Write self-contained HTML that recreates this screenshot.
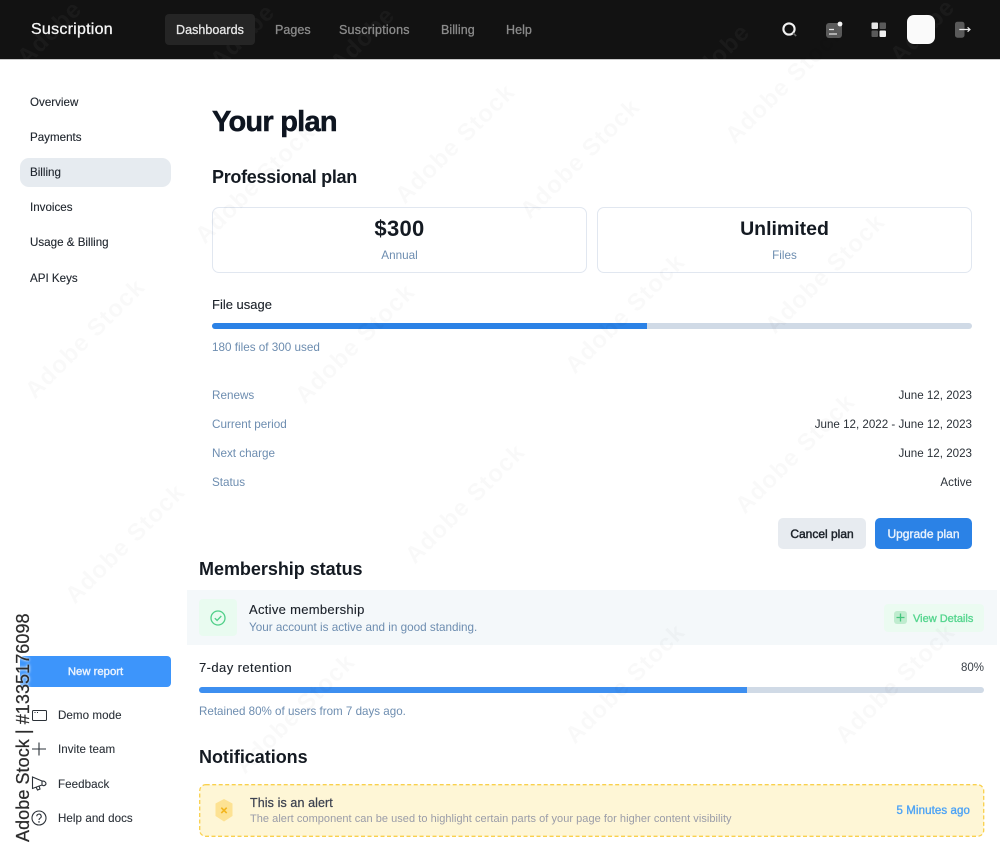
<!DOCTYPE html>
<html lang="en"><head><meta charset="utf-8"><title>Suscription</title>
<style>
html,body{margin:0;padding:0;background:#fff}
#p{position:relative;width:1000px;height:856px;overflow:hidden;background:#fff;font-family:"Liberation Sans",sans-serif;color:#1b2129}
#p div{position:absolute;white-space:nowrap}
.t{line-height:16px}
.nav{font-size:12.5px;top:22px;color:#8b8b8b;letter-spacing:.05px;-webkit-text-stroke:.3px #8b8b8b}
.side{font-size:11.6px;left:30px;color:#20262e;-webkit-text-stroke:.12px #20262e}
.lab{font-size:11.7px;left:212px;color:#6d8db0}
.val{font-size:11.6px;right:28px;color:#2b3138}
.h2{font-size:18px;font-weight:700;color:#141a22;letter-spacing:-.03px;line-height:22px}
.foot{font-size:11.6px;left:58px;color:#2b3138;letter-spacing:.05px;-webkit-text-stroke:.1px #2b3138}
svg{position:absolute}
.wm{font-size:24px;font-weight:700;color:#000;opacity:.018;transform:rotate(-45deg);transform-origin:0 0;letter-spacing:1px}
.wh{font-size:24px;font-weight:700;color:#fff;opacity:.03;transform:rotate(-45deg);transform-origin:0 0;letter-spacing:1px}
.btn{font-size:12px;text-align:center}
</style></head><body><div id="p">

<div style="left:0;top:0;width:1000px;height:59px;background:#121212;border-bottom:1px solid #c9c9c9"></div>
<div class="wh" style="left:12px;top:52px">Adobe</div>
<div class="wh" style="left:205px;top:55px">Adobe</div>
<div class="wh" style="left:325px;top:58px">Adobe</div>
<div class="wh" style="left:680px;top:75px">Adobe</div>
<div class="wh" style="left:885px;top:50px">Adobe</div>
<div class="t" style="left:31px;top:20px;font-size:16px;color:#f4f4f4;letter-spacing:.25px;line-height:20px;-webkit-text-stroke:.3px #f4f4f4">Suscription</div>
<div style="left:165px;top:14px;width:90px;height:31px;background:#252525;border-radius:4px"></div>
<div class="t nav" style="left:176px;color:#e6e6e6;-webkit-text-stroke:.3px #e6e6e6">Dashboards</div>
<div class="t nav" style="left:275px">Pages</div>
<div class="t nav" style="left:339px;letter-spacing:.22px">Suscriptions</div>
<div class="t nav" style="left:441px">Billing</div>
<div class="t nav" style="left:506px">Help</div>

<svg style="left:780px;top:20px" width="20" height="20" viewBox="0 0 20 20"><circle cx="9" cy="9" r="5.6" fill="none" stroke="#f2f2f2" stroke-width="2.1"/><path d="M13.2 13.2l3 2.8" stroke="#666" stroke-width="1.6"/></svg>
<svg style="left:824px;top:20px" width="22" height="20" viewBox="0 0 22 20"><rect x="2" y="3" width="16" height="15" rx="3" fill="#5a5a5a"/><path d="M5 9.5h5M5 14h8" stroke="#e8e8e8" stroke-width="1.2"/><circle cx="16" cy="4" r="2.4" fill="#f5f5f5"/></svg>
<svg style="left:870px;top:21px" width="18" height="18" viewBox="0 0 18 18"><rect x="1.5" y="1.5" width="6.5" height="6.5" rx="1" fill="#e6e6e6"/><rect x="9.5" y="1.5" width="6.5" height="6.5" rx="1" fill="#5a5a5a"/><rect x="1.5" y="9.500" width="6.5" height="6.5" rx="1" fill="#5a5a5a"/><rect x="9.5" y="9.5" width="6.5" height="6.5" rx="1" fill="#f0f0f0"/></svg>
<div style="left:906.5px;top:15px;width:28px;height:28.5px;background:#fafafa;border-radius:7px"></div>
<svg style="left:954px;top:20px" width="20" height="20" viewBox="0 0 20 20"><rect x="1" y="1.7" width="9.5" height="16" rx="2.5" fill="#5a5a5a"/><path d="M5.3 9.5H16M13.6 7.3l2.400 2.200-2.400 2.200" fill="none" stroke="#e8e8e8" stroke-width="1.2"/></svg>

<div style="left:20px;top:158px;width:151px;height:29px;background:#e6ebf0;border-radius:9px"></div>
<div class="t side" style="top:95px">Overview</div>
<div class="t side" style="top:130px">Payments</div>
<div class="t side" style="top:165px">Billing</div>
<div class="t side" style="top:200px">Invoices</div>
<div class="t side" style="top:235px">Usage &amp; Billing</div>
<div class="t side" style="top:271px">API Keys</div>

<div style="left:212px;top:104px;font-size:29px;font-weight:700;color:#0e1520;letter-spacing:-.75px;line-height:36px;-webkit-text-stroke:.5px #0e1520">Your plan</div>
<div class="h2" style="left:212px;top:166px;letter-spacing:-.3px">Professional plan</div>

<div style="left:212px;top:207px;width:373px;height:64px;border:1.5px solid #e1e7f0;border-radius:7px"></div>
<div style="left:597px;top:207px;width:373px;height:64px;border:1.5px solid #e1e7f0;border-radius:7px"></div>
<div style="left:212px;top:216px;width:375px;text-align:center;font-size:22px;font-weight:700;line-height:26px;color:#141a22;letter-spacing:.3px">$300</div>
<div style="left:597px;top:216px;width:375px;text-align:center;font-size:19.5px;font-weight:700;line-height:26px;color:#141a22">Unlimited</div>
<div class="t" style="left:212px;top:248px;width:375px;text-align:center;font-size:11.7px;color:#6d8db0">Annual</div>
<div class="t" style="left:597px;top:248px;width:375px;text-align:center;font-size:11.7px;color:#6d8db0">Files</div>

<div class="t" style="left:212px;top:297px;font-size:13px;color:#1b2129;-webkit-text-stroke:.12px #1b2129">File usage</div>
<div style="left:212px;top:323px;width:760px;height:6px;background:#d0dae6;border-radius:3px"></div>
<div style="left:212px;top:323px;width:435px;height:6px;background:#2b82e6;border-radius:3px 0 0 3px"></div>
<div class="t lab" style="top:340px">180 files of 300 used</div>

<div class="t lab" style="top:388px">Renews</div><div class="t val" style="top:388px">June 12, 2023</div>
<div class="t lab" style="top:417px">Current period</div><div class="t val" style="top:417px">June 12, 2022 - June 12, 2023</div>
<div class="t lab" style="top:446px">Next charge</div><div class="t val" style="top:446px">June 12, 2023</div>
<div class="t lab" style="top:475px">Status</div><div class="t val" style="top:475px">Active</div>

<div style="left:778px;top:518px;width:88px;height:31px;background:#e7ebf0;border-radius:5px"></div>
<div class="t btn" style="left:778px;top:526px;width:88px;color:#1b2129;-webkit-text-stroke:.45px #1b2129">Cancel plan</div>
<div style="left:875px;top:518px;width:97px;height:31px;background:#2b82e6;border-radius:5px"></div>
<div class="t btn" style="left:875px;top:526px;width:97px;color:#e8f1fc;-webkit-text-stroke:.4px #e8f1fc">Upgrade plan</div>

<div class="h2" style="left:199px;top:558px">Membership status</div>
<div style="left:187px;top:590px;width:810px;height:55px;background:#f4f8fa"></div>
<div style="left:199px;top:599px;width:38px;height:37px;background:#e9fbf0;border-radius:4px"></div>
<svg style="left:209px;top:609px" width="18" height="18" viewBox="0 0 18 18"><circle cx="9" cy="9" r="7" fill="none" stroke="#4fcf88" stroke-width="1.3"/><path d="M5.8 9.2l2.300 2.200 4.200-4.400" fill="none" stroke="#4fcf88" stroke-width="1.3"/></svg>
<div class="t" style="left:249px;top:602px;font-size:13px;color:#1b2129;letter-spacing:.3px;-webkit-text-stroke:.12px #1b2129">Active membership</div>
<div class="t" style="left:249px;top:620px;font-size:11.7px;color:#6d8db0">Your account is active and in good standing.</div>
<div style="left:884px;top:604px;width:100px;height:28px;background:#ebfbf1;border-radius:4px"></div>
<div style="left:894px;top:611px;width:13px;height:13px;background:#bfeccf;border-radius:3px"></div>
<svg style="left:894px;top:611px" width="13" height="13" viewBox="0 0 13 13"><path d="M6.5 2.5v8M2.5 6.5h8" stroke="#45c57e" stroke-width="1.3"/></svg>
<div class="t" style="left:913px;top:611px;font-size:11px;color:#56d68f;-webkit-text-stroke:.35px #56d68f">View Details</div>

<div class="t" style="left:199px;top:660px;font-size:13px;color:#1b2129;letter-spacing:.42px;-webkit-text-stroke:.12px #1b2129">7-day retention</div>
<div class="t" style="right:16px;top:660px;font-size:11.5px;color:#3a4048">80%</div>
<div style="left:199px;top:687px;width:785px;height:6px;background:#d0dae6;border-radius:3px"></div>
<div style="left:199px;top:687px;width:548px;height:6px;background:#3d8ff0;border-radius:3px 0 0 3px"></div>
<div class="t" style="left:199px;top:704px;font-size:11.6px;color:#6d8db0">Retained 80% of users from 7 days ago.</div>

<div class="h2" style="left:199px;top:746px">Notifications</div>
<svg style="left:199px;top:784px" width="786" height="53" viewBox="0 0 786 53"><rect x=".7" y=".7" width="784" height="51.6" rx="6" fill="#fef6d6" stroke="#f9d04c" stroke-width="1.3" stroke-dasharray="4 2.5"/></svg>
<svg style="left:215px;top:799px" width="18" height="23" viewBox="0 0 18 23"><path d="M9 0l8.5 4.5V17L9 22.5.5 17V4.5z" fill="#fde293"/><path d="M6.300 8.700l5.400 5.400M11.700 8.700l-5.400 5.400" stroke="#f3b51c" stroke-width="1.6"/></svg>
<div class="t" style="left:250px;top:795px;font-size:12.5px;color:#3d4250;letter-spacing:.1px;-webkit-text-stroke:.25px #3d4250">This is an alert</div>
<div class="t" style="left:250px;top:811px;font-size:11px;color:#9a9ca8;letter-spacing:.04px">The alert component can be used to highlight certain parts of your page for higher content visibility</div>
<div class="t" style="right:30px;top:803px;font-size:11.5px;color:#4da3f5;letter-spacing:.1px;-webkit-text-stroke:.35px #4da3f5">5 Minutes ago</div>

<div style="left:20px;top:656px;width:151px;height:31px;background:#3d95fb;border-radius:4px"></div>
<div class="t" style="left:20px;top:664px;width:151px;text-align:center;font-size:11.3px;color:#eaf3fe;-webkit-text-stroke:.4px #eaf3fe">New report</div>

<svg style="left:30px;top:706px" width="20" height="18" viewBox="0 0 20 18"><rect x="2.5" y="4.5" width="14" height="10" rx="1" fill="none" stroke="#2b3138" stroke-width="1"/><path d="M4.5 6.5h1M7 6.5h1" stroke="#2b3138"/></svg>
<svg style="left:30px;top:740px" width="18" height="18" viewBox="0 0 18 18"><path d="M9 2.500v13M2 9h14" stroke="#2b3138" stroke-width="1.1"/></svg>
<svg style="left:30px;top:774px" width="20" height="18" viewBox="0 0 20 18"><path d="M2.500 3l9.500 4v4l-9.500 3.500zM6 13l1.500 3 2.500-1-1-3.500M12 7.200a3 3 0 0 1 4 2.800 2.500 2.500 0 0 1-4 1" fill="none" stroke="#2b3138" stroke-width="1.1"/></svg>
<svg style="left:30px;top:809px" width="18" height="18" viewBox="0 0 18 18"><circle cx="9" cy="9" r="7" fill="none" stroke="#2b3138" stroke-width="1.1"/><path d="M6.800 7.300a2.200 2.200 0 1 1 3.300 1.900c-.8.500-1.100.9-1.100 1.800" fill="none" stroke="#2b3138" stroke-width="1.1"/><circle cx="9" cy="12.900" r=".8" fill="#2b3138"/></svg>
<div class="t foot" style="top:708px">Demo mode</div>
<div class="t foot" style="top:742px">Invite team</div>
<div class="t foot" style="top:777px">Feedback</div>
<div class="t foot" style="top:811px">Help and docs</div>

<div style="left:13px;top:842px;font-size:18px;line-height:20px;color:#2c2c2c;transform:rotate(-90deg);transform-origin:0 0;letter-spacing:.07px;-webkit-text-stroke:.25px #2c2c2c;text-shadow:0 0 3px rgba(255,255,255,.9),0 0 2px rgba(255,255,255,.9)">Adobe Stock | #1335176098</div>

<div class="wm" style="left:190px;top:230px">Adobe Stock</div>
<div class="wm" style="left:390px;top:190px">Adobe Stock</div>
<div class="wm" style="left:515px;top:205px">Adobe Stock</div>
<div class="wm" style="left:720px;top:130px">Adobe Stock</div>
<div class="wm" style="left:290px;top:390px">Adobe Stock</div>
<div class="wm" style="left:560px;top:360px">Adobe Stock</div>
<div class="wm" style="left:760px;top:320px">Adobe Stock</div>
<div class="wm" style="left:20px;top:385px">Adobe Stock</div>
<div class="wm" style="left:60px;top:590px">Adobe Stock</div>
<div class="wm" style="left:400px;top:550px">Adobe Stock</div>
<div class="wm" style="left:730px;top:500px">Adobe Stock</div>
<div class="wm" style="left:230px;top:760px">Adobe Stock</div>
<div class="wm" style="left:560px;top:730px">Adobe Stock</div>
<div class="wm" style="left:830px;top:730px">Adobe Stock</div>
</div></body></html>
